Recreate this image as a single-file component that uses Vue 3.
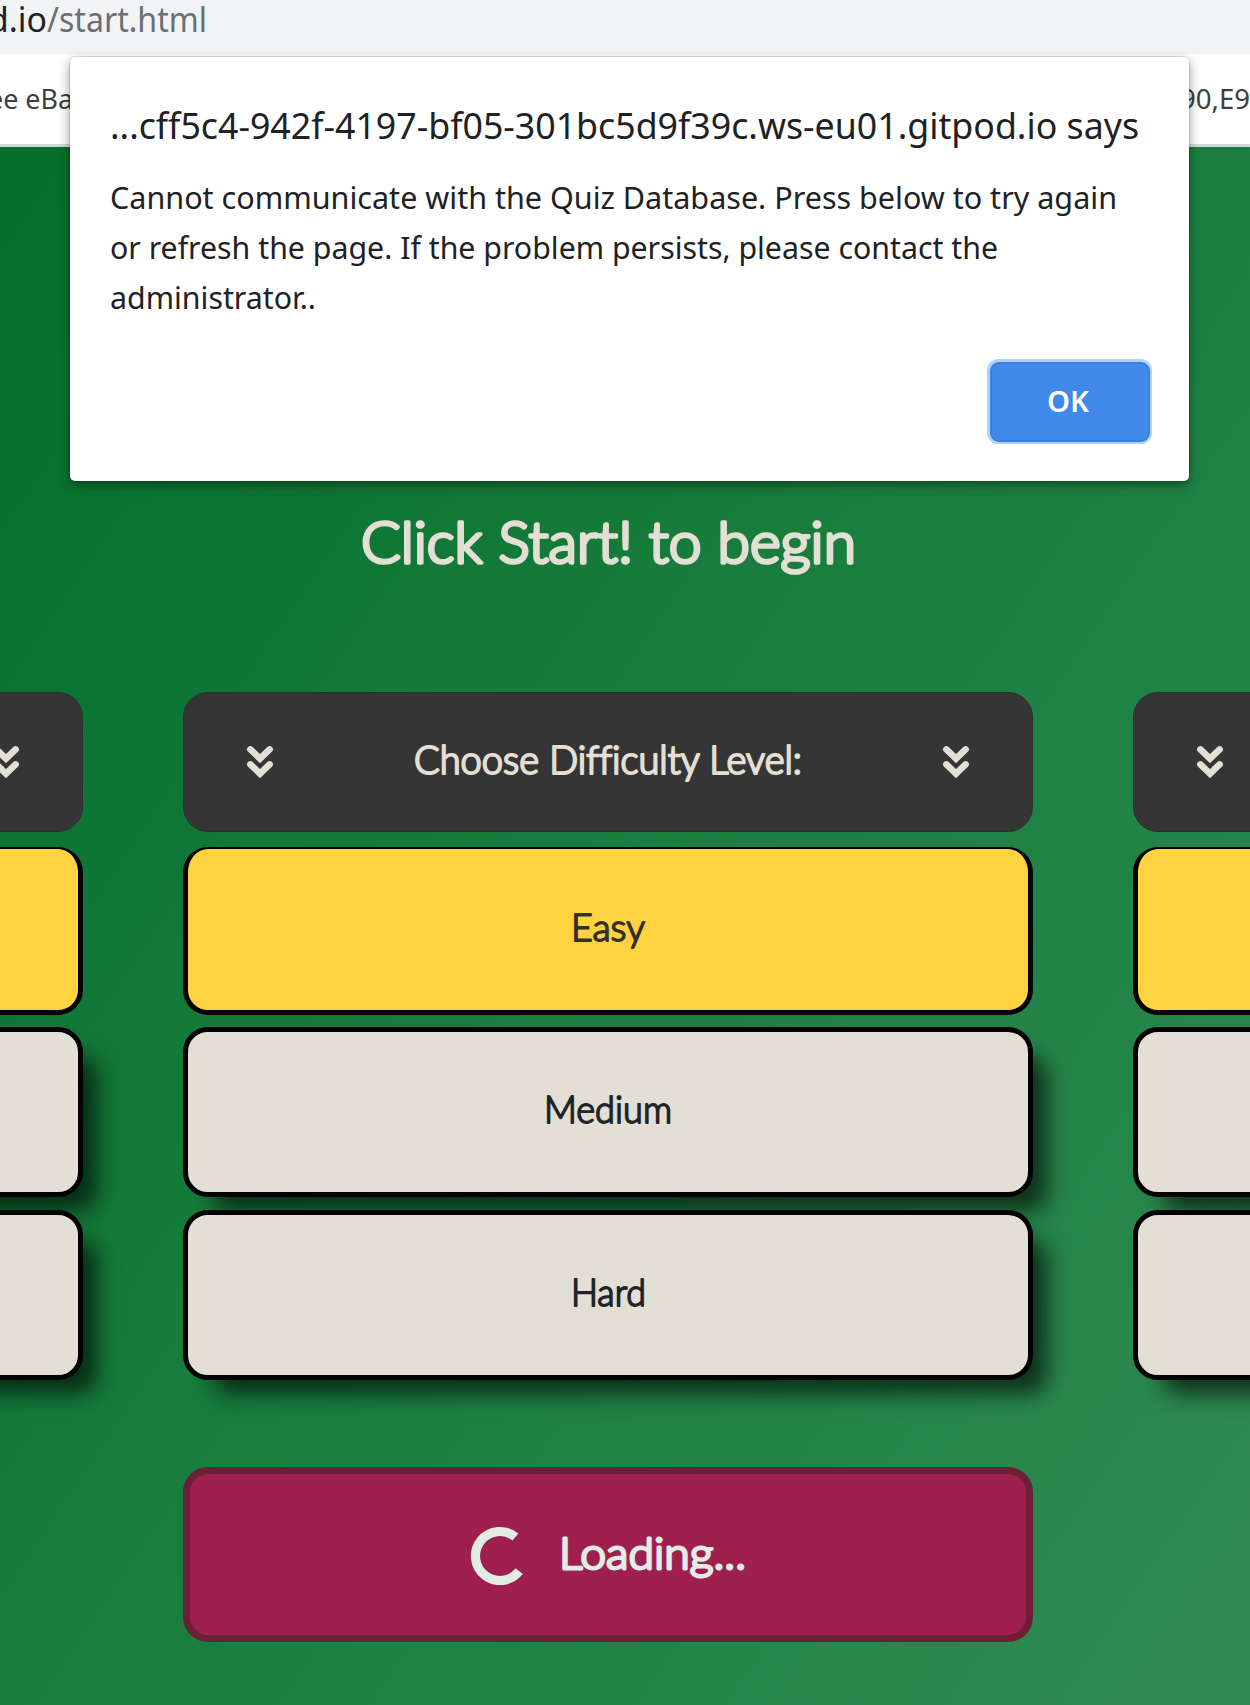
<script setup>
import { h } from 'vue'

// One line of text, fitted to a given width; font and colour come from the class on it.
const FitText = (props) =>
  h('svg', { width: props.w, height: props.lh, class: 'fit' }, [
    h('text', { x: 0, y: props.base, textLength: props.w, lengthAdjust: 'spacingAndGlyphs' }, props.t),
  ])
FitText.props = ['t', 'w', 'lh', 'base']

const Chevrons = () =>
  h('svg', { width: 28, height: 34, viewBox: '0 0 28 34', fill: 'none', stroke: '#e3dfd4', 'stroke-width': 6.6, 'stroke-linecap': 'round' }, [
    h('path', { d: 'M4.4 4.4 L14 13.6 L23.6 4.4 M4.4 19.4 L14 28.6 L23.6 19.4' }),
  ])

const columns = [
  { id: 'left', labels: false },
  { id: 'middle', labels: true },
  { id: 'right', labels: false },
]
const levels = [
  { name: 'Easy', w: 74, selected: true },
  { name: 'Medium', w: 128, selected: false },
  { name: 'Hard', w: 75, selected: false },
]
const message = [
  { t: 'Cannot communicate with the Quiz Database. Press below to try again', w: 1007 },
  { t: 'or refresh the page. If the problem persists, please contact the', w: 888 },
  { t: 'administrator..', w: 206 },
]
</script>

<template>
  <div class="screen">
    <div class="address">
      <FitText class="url host" t="d.io" :w="59" :lh="54" :base="32" />
      <FitText class="url path" t="/start.html" :w="160" :lh="54" :base="32" />
    </div>
    <div class="bookmarks">
      <FitText class="bookmark" t="ee eBa" :w="85" :lh="90" :base="55" />
      <FitText class="bookmark" t="90,E9" :w="70" :lh="90" :base="55" />
    </div>

    <main class="page">
      <h1 class="heading">
        <FitText class="hand big" t="Click Start! to begin" :w="495" :lh="70" :base="52" />
      </h1>
      <div class="columns">
        <section v-for="c in columns" :key="c.id" class="column">
          <div class="title">
            <Chevrons />
            <FitText v-if="c.labels" class="hand mid" t="Choose Difficulty Level:" :w="388" :lh="44" :base="34" />
            <Chevrons />
          </div>
          <div v-for="l in levels" :key="l.name" class="option" :class="{ selected: l.selected }">
            <FitText v-if="c.labels" class="hand small" :t="l.name" :w="l.w" :lh="44" :base="32.5" />
          </div>
        </section>
      </div>
      <div class="loading">
        <svg class="spinner" width="60" height="60" viewBox="-30 -31 60 60">
          <path d="M15.4 -19 A24.5 24.5 0 1 0 19.2 15.2" fill="none" stroke="#e0ece4" stroke-width="9.2" />
        </svg>
        <FitText class="hand load" t="Loading..." :w="187" :lh="60" :base="44" />
      </div>
    </main>

    <div class="dialog">
      <FitText class="dialog-title" t="...cff5c4-942f-4197-bf05-301bc5d9f39c.ws-eu01.gitpod.io says" :w="1029" :lh="60" :base="43" />
      <div class="message">
        <FitText v-for="m in message" :key="m.t" class="line" :t="m.t" :w="m.w" :lh="50" :base="37" />
      </div>
      <button class="ok"><FitText class="ok-text" t="OK" :w="42" :lh="40" :base="30" /></button>
    </div>
  </div>
</template>

<style>
body { margin: 0; overflow: hidden; }
</style>

<style scoped>
.screen {
  position: relative;
  width: 1250px;
  height: 1705px;
  overflow: hidden;
  display: flex;
  flex-direction: column;
  font-family: "Noto Sans", "Open Sans", sans-serif;
}
.fit { display: block; overflow: visible; flex: none; }
.address {
  display: flex;
  height: 54px;
  margin-left: -12px;
  background: #f1f3f4;
}
.url { font-size: 35px; }
.host { fill: #202124; }
.path { fill: #6b6e72; }
.bookmarks {
  box-sizing: border-box;
  display: flex;
  justify-content: space-between;
  height: 93px;
  border-bottom: 3px solid #d2d9db;
  background: #fff;
}
.bookmark { font-size: 28px; fill: #3c4043; }
.bookmark:first-child { margin-left: -12px; }
.page {
  flex: 1;
  display: flex;
  flex-direction: column;
  align-items: center;
  background: linear-gradient(124deg, #036f2b, #1a7e3f 50%, #308b53);
}
.heading { margin: 364px 33px 0 0; height: 181px; }
.hand {
  font-family: Lato, "Open Sans", sans-serif;
  font-weight: 300;
  font-variant-ligatures: none;
  fill: #e3dfd4;
  stroke: #e3dfd4;
  stroke-linejoin: round;
  stroke-linecap: round;
}
.big { font-size: 57px; stroke-width: 3.6px; }
.mid { font-size: 38.5px; stroke-width: 2.2px; }
.small { font-size: 38px; stroke-width: 1.8px; fill: #212529; stroke: #212529; }
.selected .small { fill: #333026; stroke: #333026; }
.load { font-size: 44px; stroke-width: 2.8px; fill: #e0ece4; stroke: #e0ece4; }
.columns { display: flex; gap: 100px; margin-right: 34px; }
.column { width: 850px; flex: none; display: flex; flex-direction: column; }
.title {
  box-sizing: border-box;
  display: flex;
  align-items: center;
  justify-content: space-between;
  height: 140px;
  margin-bottom: 15px;
  padding: 0 62px;
  border: 1px solid #2d302e;
  border-radius: 25px;
  background: #353535;
}
.option {
  box-sizing: border-box;
  display: flex;
  align-items: center;
  justify-content: center;
  height: 170px;
  margin-bottom: 13px;
  border: 5px solid #000;
  border-radius: 25px;
  background: #e3dfd4;
  box-shadow: 22px 22px 22px -8px rgba(0, 0, 0, 0.64);
}
.option:last-child { margin-bottom: 0; }
.option.selected {
  height: 168px;
  margin-bottom: 12px;
  border-top-width: 2px;
  background: #ffd23f;
  box-shadow: none;
}
.loading {
  box-sizing: border-box;
  display: flex;
  align-items: center;
  justify-content: center;
  width: 850px;
  height: 175px;
  margin: 87px 34px 0 0;
  border: 7px solid #6b2038;
  border-radius: 25px;
  background: #9f204f;
}
.spinner { margin: 0 29px 0 -1px; }
.dialog {
  position: absolute;
  left: 70px;
  top: 57px;
  box-sizing: border-box;
  width: 1119px;
  height: 424px;
  padding: 39px 39px 0 40px;
  display: flex;
  flex-direction: column;
  border-radius: 5px;
  background: #fff;
  box-shadow: 0 0 0 1px rgba(0, 0, 0, 0.1), 0 4px 12px rgba(0, 0, 0, 0.42);
}
.dialog-title { font-size: 36px; fill: #202124; }
.message { display: flex; flex-direction: column; margin-top: 16px; }
.line { font-size: 31.5px; fill: #202124; }
.ok {
  display: flex;
  align-items: center;
  justify-content: center;
  align-self: flex-end;
  box-sizing: border-box;
  width: 160px;
  height: 80px;
  margin-top: 40px;
  padding: 0 4px 0 0;
  border: 2px solid #3581e6;
  border-radius: 9px;
  background: #4089eb;
  box-shadow: -0.5px -0.5px 0 2.5px #b3d0f8;
  font-family: inherit;
}
.ok-text { font-size: 29.5px; font-weight: 600; fill: #fff; }
</style>
